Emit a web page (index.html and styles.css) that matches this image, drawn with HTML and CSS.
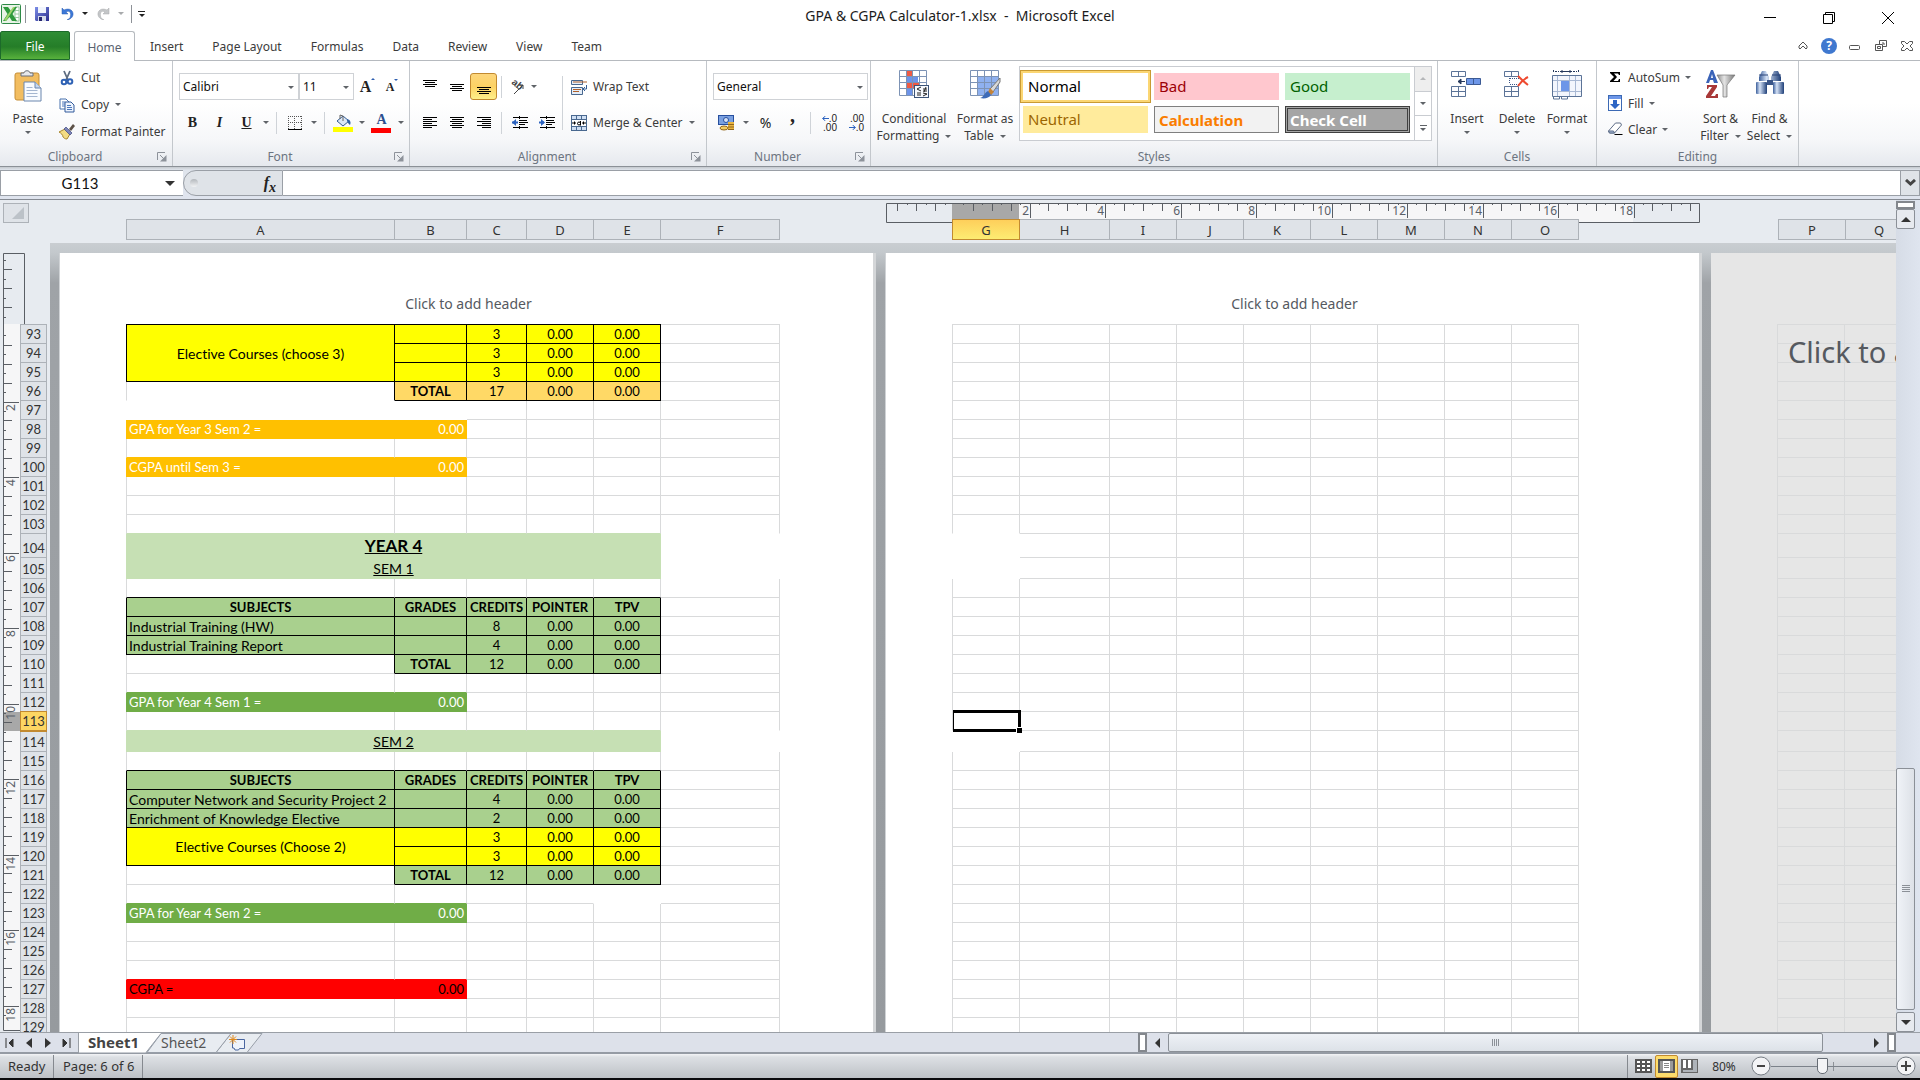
FILE: index.html
```html
<!DOCTYPE html>
<html lang="en">
<head>
<meta charset="utf-8">
<title>GPA &amp; CGPA Calculator-1.xlsx - Microsoft Excel</title>
<link rel="stylesheet" href="styles.css">
</head>
<body>
<svg class="sprite" aria-hidden="true">
  <defs>
    <linearGradient id="g-cyl" x1="0" y1="0" x2="1" y2="0"><stop offset="0" stop-color="#3c5f9b"/><stop offset=".35" stop-color="#d5e2f6"/><stop offset="1" stop-color="#1f3f78"/></linearGradient>
    <linearGradient id="g-metal" x1="0" y1="0" x2="1" y2="0"><stop offset="0" stop-color="#8b8b8b"/><stop offset=".4" stop-color="#e4e4e4"/><stop offset="1" stop-color="#777"/></linearGradient>
    <linearGradient id="g-save" x1="0" y1="0" x2="1" y2="1"><stop offset="0" stop-color="#7d8fe8"/><stop offset="1" stop-color="#2a2c8c"/></linearGradient>
  </defs>
  <symbol id="excel" viewBox="0 0 20 20"><rect x=".5" y=".5" width="19" height="19" rx="1" fill="#e9f3e7" stroke="#2e8a47"/><path d="M14 3h4v14h-4z" fill="#fff" stroke="#9ccaa3"/><path d="M14 6.500h4M14 10h4M14 13.500h4" stroke="#9ccaa3"/><path d="M2 3h5l3 4 3-4h3l-4.500 7L16 17h-5l-2.500-4L5 17H2l4.500-7z" fill="#2f9a3d"/><path d="M3 16l9-13h2L5 17z" fill="#9fd46e"/></symbol>
  <symbol id="save" viewBox="0 0 14 14"><path d="M0 0h14v14H1l-1-1z" fill="url(#g-save)"/><path d="M3 0h8v6H3z" fill="#f1f5fd"/><path d="M3 9h8v5H3z" fill="#d5dbea"/><path d="M4 10h3v4H4z" fill="#25266e"/></symbol>
  <symbol id="undo" viewBox="0 0 13 13"><path d="M1 1v6h6L5 5c3-2 6 0 4 6l-3 2c6-1 8-7 4-10-2-1.500-5-1-7 0z" fill="#3c78d8" stroke="#2a5db0" stroke-width=".5"/></symbol>
  <symbol id="redo" viewBox="0 0 13 13"><path d="M12 1v6H6l2-2C5 3 2 5 4 11l3 2C1 12-1 6 3 3c2-1.500 5-1 7 0z" fill="#c4c6c8" stroke="#a9abad" stroke-width=".5"/></symbol>
  <symbol id="paste" viewBox="0 0 28 32"><rect x="1" y="3" width="24" height="27" rx="2" fill="#f2bd60" stroke="#c58e36"/><path d="M7 6V3h3c0-3 6-3 6 0h3v3z" fill="#e6e8ec" stroke="#6a6f78"/><path d="M10 12h11l6 6v13H10z" fill="#f8fbff" stroke="#6b86ad"/><path d="M21 12v6h6" fill="#c7d8ef" stroke="#6b86ad"/><path d="M12.500 17.500h6M12.500 20.500h11M12.500 23.500h11M12.500 26.500h11" stroke="#a4b6d0"/></symbol>
  <symbol id="cut" viewBox="0 0 16 16"><path d="M5 1l4 9M11 1L7 10" stroke="#5d6c80" stroke-width="1.800"/><circle cx="5" cy="12" r="2.300" fill="none" stroke="#2f62b5" stroke-width="2"/><circle cx="11" cy="11.500" r="2.300" fill="none" stroke="#2f62b5" stroke-width="2"/></symbol>
  <symbol id="copy" viewBox="0 0 16 16"><path d="M1 2h6l3 3v7H1z" fill="#fff" stroke="#4770ad"/><path d="M6 5h6l3 3v7H6z" fill="#eef4fd" stroke="#335b9b"/><path d="M3 5h3M3 7h3M3 9h3M8 8.500h4M8 10.500h5M8 12.500h5" stroke="#4b77bb"/></symbol>
  <symbol id="painter" viewBox="0 0 16 16"><path d="M0 8l6-3 5 5-3 5c-2 0-3-1-4-2 0-2-2-4-4-5z" fill="#f4dc84" stroke="#a8862d"/><path d="M5 5l2-2 6 6-2 2z" fill="#7f86b8" stroke="#3e4780" stroke-width=".7"/><path d="M10 5l4-5 2 2-4 5z" fill="#5c5147"/></symbol>
  <symbol id="launch" viewBox="0 0 10 10"><path d="M.5 8V.5H8" fill="none" stroke="#8d929a"/><path d="M9.500 3v6.500H3z" fill="#8d929a"/><path d="M3 3l4 4" stroke="#8d929a"/></symbol>
  <symbol id="border" viewBox="0 0 14 14"><path d="M0 .5h14M0 6.500h14M.5 0v13M6.500 0v13M13.500 0v13" stroke="#555" stroke-dasharray="1 1" fill="none"/><path d="M0 13.500h14" stroke="#000"/></symbol>
  <symbol id="fill" viewBox="0 0 20 18"><path d="M4 7l6-5 6 5-6 5z" fill="#dbe7f7" stroke="#355d92"/><path d="M7 5V1l3 1v5" fill="none" stroke="#666"/><path d="M14 5c4 1 4 4 3 6-2-1-2-3-3-4z" fill="#2f62a8"/><path d="M0 13h20v5H0z" fill="#ff0"/></symbol>
  <symbol id="lines-top" viewBox="0 0 14 14"><path d="M0 .5h14M2 2.500h10M0 4.500h14M2 6.500h10" stroke="#000"/></symbol>
  <symbol id="lines-mid" viewBox="0 0 14 14"><path d="M0 4.500h14M2 6.500h10M0 8.500h14M2 10.500h10" stroke="#000"/></symbol>
  <symbol id="lines-bot" viewBox="0 0 14 14"><path d="M0 7.500h14M2 9.500h10M0 11.500h14M2 13.500h10" stroke="#000"/></symbol>
  <symbol id="al-left" viewBox="0 0 14 12"><path d="M0 .5h14M0 2.500h9M0 4.500h14M0 6.500h9M0 8.500h14M0 10.500h9" stroke="#000"/></symbol>
  <symbol id="al-center" viewBox="0 0 14 12"><path d="M0 .5h14M2 2.500h10M0 4.500h14M2 6.500h10M0 8.500h14M2 10.500h10" stroke="#000"/></symbol>
  <symbol id="al-right" viewBox="0 0 14 12"><path d="M0 .5h14M5 2.500h9M0 4.500h14M5 6.500h9M0 8.500h14M5 10.500h9" stroke="#000"/></symbol>
  <symbol id="outdent" viewBox="0 0 16 14"><path d="M0 6.500h6" stroke="#2d63bf" stroke-width="2"/><path d="M0 6.500L4 3v7z" fill="#2d63bf"/><path d="M1 1.500h15M8 4.500h7M8 6.500h8M8 8.500h5M1 11.500h15" stroke="#000"/><path d="M7.500 0v14" stroke="#000" stroke-dasharray="1 1"/></symbol>
  <symbol id="indent" viewBox="0 0 16 14"><path d="M0 6.500h5" stroke="#2d63bf" stroke-width="2"/><path d="M6 6.500L2 3v7z" fill="#2d63bf"/><path d="M1 1.500h15M8 4.500h7M8 6.500h8M8 8.500h5M1 11.500h15" stroke="#000"/><path d="M7.500 0v14" stroke="#000" stroke-dasharray="1 1"/></symbol>
  <symbol id="wrap" viewBox="0 0 16 16"><path d="M.5 1.500h11v4H.5zM.5 8.500h11v7H.5z" fill="#e4edf8" stroke="#49688f"/><path d="M2 3h14" stroke="#b0602a"/><path d="M2 10.500h8M2 12.500h6" stroke="#b0602a"/><path d="M15.500 6v4h-3M14 8l-2 2 2 2" stroke="#355d92" fill="none"/></symbol>
  <symbol id="merge" viewBox="0 0 16 16"><rect x=".5" y=".5" width="15" height="15" fill="#cfdff3" stroke="#49688f"/><path d="M1 4.500h14M1 11.500h14M5.500 1v3M10.500 1v3M5.500 12v3M10.500 12v3" stroke="#49688f"/><path d="M1 5h14v6H1z" fill="#fff"/><path d="M1 8h3M12 8h3" stroke="#000"/><path d="M3 6l2 2-2 2zM13 6l-2 2 2 2z"/><circle cx="8" cy="8.500" r="1.500" fill="none" stroke="#000"/><path d="M9.500 6v4.500" stroke="#000"/></symbol>
  <symbol id="money" viewBox="0 0 17 16"><rect x=".5" y=".5" width="15" height="9" fill="#7aa0e0" stroke="#274f9e"/><circle cx="8" cy="5" r="2.500" fill="#d7e3f7" stroke="#274f9e"/><path d="M10 7h6v8h-6z" fill="#e8b440"/><path d="M10 9.500h6M10 12h6M10 14.500h6" stroke="#94661a"/><ellipse cx="6" cy="13" rx="4" ry="2" fill="#f4cd62" stroke="#94661a"/></symbol>
  <symbol id="cond" viewBox="0 0 31 29"><path d="M.5 .5h27v25H.5z" fill="#fff"/><path d="M7 0h7v6H7zM7 13h13v6H7z" fill="#ee5a44"/><path d="M7 6h12v7H7zM7 19h6v6H7z" fill="#6c93ea"/><path d="M.5 .5h27v25H.5zM0 6.500h28M0 12.500h28M0 18.500h28M7.500 0v25M13.500 0v25M20.500 0v25" fill="none" stroke="#7d93b5"/><rect x="15.500" y="15.500" width="14" height="12" fill="#f6f9fe" stroke="#3c5478"/><path d="M22 17l-4 2 4 2M18 23h4M18 25h4M24 19h4M24 21h4M27 17l-2 5M24 23l4 1-4 2" stroke="#222" fill="none"/></symbol>
  <symbol id="fmt-table" viewBox="0 0 31 29"><path d="M.5 .5h28v25H.5z" fill="#fff"/><path d="M7 7h21v18H7z" fill="#8fb1f0"/><path d="M.5 .5h28v25H.5zM0 6.500h28M0 12.500h28M0 18.500h28M7.500 0v25M14.500 0v25M21.500 0v25" fill="none" stroke="#7d93b5"/><path d="M30 8L20 19l3 3 7-10z" fill="#d8d8d8" stroke="#777"/><path d="M20 18l4 4-3 3-3-3z" fill="#c48338"/><path d="M18 21l3 4c-2 3-6 4-11 3 4-1 4-5 8-7z" fill="#3e6bb8"/></symbol>
  <symbol id="ins" viewBox="0 0 32 28"><path d="M.5 1.500h14v5H.5zM7.500 2v4M.5 16.500h14v10H.5zM.5 21.500h14M7.500 17v9" fill="#fdfdff" stroke="#5b7397"/><path d="M15.500 8.500h14v6h-14zM22.500 9v5" fill="#6d96e8" stroke="#3c5a94"/><path d="M7 11.500h7M10 9l-3 2.500 3 2.500z" stroke="#26395c" fill="#26395c"/></symbol>
  <symbol id="del" viewBox="0 0 26 28"><path d="M.5 1.500h14v5H.5zM7.500 2v4M.5 16.500h14v10H.5zM.5 21.500h14M7.500 17v9" fill="#fdfdff" stroke="#5b7397"/><path d="M6 8.500h9M6 14.500h9M5.500 8v6" stroke="#3a5688" stroke-dasharray="1 1"/><path d="M14 6c3 3 6 6 10 9M24 7c-4 2-7 5-10 9" stroke="#ee4a30" stroke-width="2" fill="none"/></symbol>
  <symbol id="fmt" viewBox="0 0 30 30"><path d="M1.500 0v3M26.500 0v3M3 1.500h4M21 1.500h4" stroke="#26395c" stroke-dasharray="2 1"/><path d="M8 1.500h12M10 0v3M18 0v3" stroke="#26395c"/><path d="M.5 5.500h29v21H.5z" fill="#f3f6fd" stroke="#5b7397"/><path d="M1 10.500h28M1 21.500h28M5.500 6v20M17.500 6v20M23.500 6v20" stroke="#a9b9d4"/><path d="M9 11h8v10H9z" fill="#6d96e8"/><path d="M1.500 27v2h6v-2M9.500 27v2h6v-2" stroke="#5b7397" fill="#fff"/></symbol>
  <symbol id="sigma" viewBox="0 0 12 12"><path d="M1 1h10v3h-1L9 2.500H5L8 6l-3.500 4H9l1-2h1v3H1v-1l4-4-4-4z"/></symbol>
  <symbol id="filldown" viewBox="0 0 14 16"><rect x=".5" y=".5" width="13" height="15" fill="#fff" stroke="#3c69b4"/><path d="M1 1h12v3H1z" fill="#6d96e8"/><path d="M5 5h4v4h3l-5 5-5-5h3z" fill="#2f66c4"/></symbol>
  <symbol id="eraser" viewBox="0 0 15 14"><path d="M1 9l7-8h5l1 2-7 8H2z" fill="#fff" stroke="#5d6c86"/><path d="M1 9h5l1 2H2z" fill="#a8bde0" stroke="#5d6c86"/><path d="M7 12.500h8" stroke="#000"/></symbol>
  <symbol id="funnel" viewBox="0 0 30 30"><path d="M11 5h18l-8 10v12h-4V15z" fill="url(#g-metal)" stroke="#777" stroke-width=".7"/><path d="M0 13L5 0h2l5 13H8l-1-3H4l-1 3zM5 8h2L6 4z" fill="#3a63b8"/><path d="M1 15h10v2L5 26h4l1-2h2v4H0v-2l6-9H3l-1 2H1z" fill="#a83838"/></symbol>
  <symbol id="binoc" viewBox="0 0 28 25"><path d="M6 1h4l3 6v4H3V7zM18 1h4l3 6v4H15V7z" fill="url(#g-cyl)"/><path d="M3 5h9M16 5h9" stroke="#2a4578"/><path d="M11 10h6v5h-6z" fill="#3a5588"/><rect x="0" y="12" width="11" height="12" rx="1" fill="url(#g-cyl)"/><rect x="17" y="12" width="11" height="12" rx="1" fill="url(#g-cyl)"/></symbol>
  <symbol id="newsheet" viewBox="0 0 18 16"><path d="M4.500 4.500h12v9h-5l-1 1.500H7l-1-2H4.500z" fill="#eef3fb" stroke="#4a66a0"/><path d="M5 0v9M1 4.500h8M2 1.500l6 6M8 1.500l-6 6" stroke="#e08a1e"/></symbol>
  <symbol id="arrow-l" viewBox="0 0 7 5"><path d="M1 2.500h6M3.500 0L.5 2.500l3 2.500" fill="none" stroke="#2d63bf"/></symbol>
  <symbol id="arrow-r" viewBox="0 0 7 5"><path d="M0 2.500h6M3.500 0l3 2.500-3 2.500" fill="none" stroke="#2d63bf"/></symbol>
</svg>

<header class="titlebar">
  <div class="quick">
    <svg class="i20"><use href="#excel"/></svg>
    <i class="bar"></i>
    <button class="qbtn" aria-label="Save"><svg class="i14"><use href="#save"/></svg></button>
    <button class="qbtn dd dark" aria-label="Undo"><svg class="i13"><use href="#undo"/></svg></button>
    <button class="qbtn dd pale" aria-label="Redo"><svg class="i13"><use href="#redo"/></svg></button>
    <i class="bar"></i>
    <button class="qbtn more dark" aria-label="Customize toolbar"></button>
  </div>
  <h1 class="title">GPA &amp; CGPA Calculator-1.xlsx&nbsp; -&nbsp; Microsoft Excel</h1>
  <div class="winctl">
    <button aria-label="Minimize"><svg width="12" height="12"><path d="M0 5.500h12" stroke="#000"/></svg></button>
    <button aria-label="Restore"><svg width="12" height="12"><path d="M.5 2.500h9v9h-9zM2.500 2V.5h9v9H10" fill="none" stroke="#000"/></svg></button>
    <button aria-label="Close"><svg width="12" height="12"><path d="M0 0l12 12M12 0L0 12" stroke="#000"/></svg></button>
  </div>
</header>

<nav class="tabs">
  <button class="tab file">File</button>
  <button class="tab active">Home</button>
  <button class="tab">Insert</button>
  <button class="tab">Page Layout</button>
  <button class="tab">Formulas</button>
  <button class="tab">Data</button>
  <button class="tab">Review</button>
  <button class="tab">View</button>
  <button class="tab">Team</button>
  <div class="docctl">
    <button aria-label="Collapse ribbon"><svg width="10" height="9"><path d="M1 5l4-4 4 4v2l-1 1-3-3-3 3-1-1z" fill="#fff" stroke="#555"/></svg></button>
    <button class="help" aria-label="Help">?</button>
    <button aria-label="Minimize workbook"><svg width="12" height="8"><rect x=".5" y="3.500" width="10" height="4" rx="1" fill="#fff" stroke="#555"/></svg></button>
    <button aria-label="Restore workbook"><svg width="12" height="12"><path d="M4.500 4V.5h7v6H8M.5 4.500h7v6h-7zM2.500 6.500h3v2h-3zM7 3h2v2" fill="none" stroke="#555"/></svg></button>
    <button aria-label="Close workbook"><svg width="12" height="10"><path d="M.5.5h3L6 3 8.500.5h3v2L9 5l2.500 2.500v2h-3L6 7 3.500 9.500h-3v-2L3 5 .5 2.500z" fill="#fff" stroke="#555"/></svg></button>
  </div>
</nav>

<section class="ribbon">
  <div class="group clipboard">
    <div class="gbody">
      <button class="big paste"><svg width="28" height="32"><use href="#paste"/></svg><span>Paste</span><i class="arrow"></i></button>
      <div class="stack">
        <button class="small"><svg class="i16"><use href="#cut"/></svg>Cut</button>
        <button class="small"><svg class="i16"><use href="#copy"/></svg>Copy<i class="arrow"></i></button>
        <button class="small"><svg class="i16"><use href="#painter"/></svg>Format Painter</button>
      </div>
    </div>
    <div class="glabel">Clipboard<svg class="launch"><use href="#launch"/></svg></div>
  </div>
  <div class="group font">
    <div class="gbody rows">
      <div class="row">
        <span class="combo name"><select aria-label="Font"><option>Calibri</option></select></span>
        <span class="combo size"><select aria-label="Font size"><option>11</option></select></span>
        <button class="tool glyph grow" aria-label="Grow font">A</button>
        <button class="tool narrow glyph shrink" aria-label="Shrink font">A</button>
      </div>
      <div class="row">
        <button class="tool glyph">B</button><button class="tool glyph italic">I</button><button class="tool glyph under">U</button><i class="arrow cell"></i>
        <i class="vsep"></i>
        <button class="tool" aria-label="Borders"><svg class="i14"><use href="#border"/></svg></button><i class="arrow cell"></i>
        <i class="vsep"></i>
        <button class="tool" aria-label="Fill color"><svg width="20" height="18"><use href="#fill"/></svg></button><i class="arrow cell"></i>
        <button class="tool glyph fontcolor" aria-label="Font color">A</button><i class="arrow cell"></i>
      </div>
    </div>
    <div class="glabel">Font<svg class="launch"><use href="#launch"/></svg></div>
  </div>
  <div class="group align">
    <div class="gbody">
      <div class="rows">
        <div class="row">
          <button class="tool" aria-label="Top align"><svg class="i14"><use href="#lines-top"/></svg></button>
          <button class="tool" aria-label="Middle align"><svg class="i14"><use href="#lines-mid"/></svg></button>
          <button class="tool on" aria-label="Bottom align"><svg class="i14"><use href="#lines-bot"/></svg></button>
          <i class="vsep"></i>
          <button class="tool narrow" aria-label="Orientation"><svg class="orient" width="16" height="16"><text x="1" y="9" class="ab" transform="rotate(40 8 8)">ab</text><path d="M5 15L14 6M10 6h4v4" fill="none" stroke="#444"/></svg></button><i class="arrow cell"></i>
        </div>
        <div class="row">
          <button class="tool" aria-label="Align left"><svg width="14" height="12"><use href="#al-left"/></svg></button>
          <button class="tool" aria-label="Center"><svg width="14" height="12"><use href="#al-center"/></svg></button>
          <button class="tool" aria-label="Align right"><svg width="14" height="12"><use href="#al-right"/></svg></button>
          <i class="vsep"></i>
          <button class="tool" aria-label="Decrease indent"><svg width="16" height="14"><use href="#outdent"/></svg></button>
          <button class="tool" aria-label="Increase indent"><svg width="16" height="14"><use href="#indent"/></svg></button>
        </div>
      </div>
      <div class="rows wrapcol">
        <button class="small row"><svg class="i16"><use href="#wrap"/></svg>Wrap Text</button>
        <button class="small row"><svg class="i16"><use href="#merge"/></svg>Merge &amp; Center<i class="arrow"></i></button>
      </div>
    </div>
    <div class="glabel">Alignment<svg class="launch"><use href="#launch"/></svg></div>
  </div>
  <div class="group number">
    <div class="gbody rows">
      <div class="row"><span class="combo format"><select aria-label="Number format"><option>General</option></select></span></div>
      <div class="row">
        <button class="tool" aria-label="Accounting format"><svg width="17" height="16"><use href="#money"/></svg></button><i class="arrow cell"></i>
        <button class="tool pct">%</button><button class="tool glyph comma">,</button>
        <i class="vsep"></i>
        <button class="tool dec" aria-label="Increase decimal"><span><svg width="7" height="5"><use href="#arrow-l"/></svg>.0</span><span>.00</span></button>
        <button class="tool dec" aria-label="Decrease decimal"><span>.00</span><span><svg width="7" height="5"><use href="#arrow-r"/></svg>.0</span></button>
      </div>
    </div>
    <div class="glabel">Number<svg class="launch"><use href="#launch"/></svg></div>
  </div>
  <div class="group styles">
    <div class="gbody">
      <button class="big cond"><svg width="31" height="29"><use href="#cond"/></svg><span>Conditional<br>Formatting<i class="arrow"></i></span></button>
      <button class="big ftab"><svg width="31" height="29"><use href="#fmt-table"/></svg><span>Format as<br>Table<i class="arrow"></i></span></button>
      <div class="gallery">
        <div class="swatches">
          <button class="sw normal">Normal</button><button class="sw bad">Bad</button><button class="sw good">Good</button>
          <button class="sw neutral">Neutral</button><button class="sw calc">Calculation</button><button class="sw check">Check Cell</button>
        </div>
        <div class="gscroll">
          <button class="off" aria-label="Previous styles"><i class="arrow up"></i></button>
          <button aria-label="Next styles"><i class="arrow"></i></button>
          <button class="all" aria-label="All styles"><i class="arrow"></i></button>
        </div>
      </div>
    </div>
    <div class="glabel">Styles</div>
  </div>
  <div class="group cells">
    <div class="gbody">
      <button class="big"><svg width="32" height="28"><use href="#ins"/></svg><span>Insert</span><i class="arrow"></i></button>
      <button class="big"><svg width="26" height="28"><use href="#del"/></svg><span>Delete</span><i class="arrow"></i></button>
      <button class="big"><svg width="30" height="30"><use href="#fmt"/></svg><span>Format</span><i class="arrow"></i></button>
    </div>
    <div class="glabel">Cells</div>
  </div>
  <div class="group editing">
    <div class="gbody">
      <div class="stack">
        <button class="small"><svg width="16" height="12"><use href="#sigma"/></svg>AutoSum<i class="arrow"></i></button>
        <button class="small"><svg class="i16"><use href="#filldown"/></svg>Fill<i class="arrow"></i></button>
        <button class="small"><svg width="16" height="14"><use href="#eraser"/></svg>Clear<i class="arrow"></i></button>
      </div>
      <button class="big"><svg width="30" height="30"><use href="#funnel"/></svg><span>Sort &amp;<br>Filter<i class="arrow"></i></span></button>
      <button class="big"><svg width="28" height="25"><use href="#binoc"/></svg><span>Find &amp;<br>Select<i class="arrow"></i></span></button>
    </div>
    <div class="glabel">Editing</div>
  </div>
</section>

<section class="formulabar">
  <div class="namebox"><input aria-label="Name box" value="G113"><i class="arrow dark"></i></div>
  <div class="fx"><i class="dot"></i><button aria-label="Insert function"><em>f</em><sub>x</sub></button></div>
  <input class="formula" aria-label="Formula bar" value="">
  <button class="expand" aria-label="Expand formula bar"><svg width="11" height="8"><path d="M1 1l4.500 4L10 1" fill="none" stroke="#444" stroke-width="3"/></svg></button>
</section>

<main class="workspace">
  <div class="headstrip">
    <button class="corner" aria-label="Select all"><svg width="12" height="12"><path d="M12 0v12H0z" fill="#bcc2c8"/></svg></button>
    <div class="colheads" id="heads-1"></div>
    <div class="rulerbox"><svg id="hruler" width="816" height="20"></svg><div class="colheads" id="heads-2"></div></div>
    <div class="colheads last" id="heads-3"></div>
  </div>
  <div class="canvas">
    <div class="gutter">
      <svg id="vruler" width="25" height="778"></svg>
      <div class="rowheads" id="rowheads"></div>
    </div>
    <div class="pages">
      <section class="page"><p class="pagehead">Click to add header</p><table id="sheet-1" aria-label="Page 1"></table></section>
      <section class="page"><p class="pagehead">Click to add header</p><table id="sheet-2" aria-label="Page 2"></table></section>
      <section class="page blank"><p class="hint">Click to add data</p><table id="sheet-3" aria-label="Page 3"></table></section>
    </div>
  </div>
  <div class="vscroll">
    <i class="split"></i>
    <button aria-label="Scroll up"><i class="arrow up dark"></i></button>
    <div class="track"><div class="thumb"><i class="grip"></i></div></div>
    <button aria-label="Scroll down"><i class="arrow dark"></i></button>
  </div>
</main>

<footer class="sheetbar">
  <div class="nav">
    <button aria-label="First sheet"><svg width="9" height="10"><path d="M1 0v10M8 1v8L4 5z" fill="#333" stroke="#333" stroke-width="1"/></svg></button>
    <button aria-label="Previous sheet"><svg width="6" height="10"><path d="M6 0v10L0 5z" fill="#333"/></svg></button>
    <button aria-label="Next sheet"><svg width="6" height="10"><path d="M0 0v10l6-5z" fill="#333"/></svg></button>
    <button aria-label="Last sheet"><svg width="9" height="10"><path d="M8 0v10M1 1v8l4-4z" fill="#333" stroke="#333" stroke-width="1"/></svg></button>
  </div>
  <div class="sheets">
    <svg class="tabshapes" width="190" height="20"><path d="M137 19.500L152 .5h31L168 19.500z" fill="#e8ecf1" stroke="#979ea8"/><path d="M68 19.500L82 .5h70L137 19.500z" fill="#e8ecf1" stroke="#979ea8"/><path d="M0 0h82L67 19.500H0z" fill="#fff"/><path d="M82 .5L67 19.500" stroke="#979ea8"/></svg>
    <button class="current">Sheet1</button>
    <button>Sheet2</button>
    <button aria-label="New sheet"><svg width="18" height="16"><use href="#newsheet"/></svg></button>
  </div>
  <div class="hscroll">
    <i class="split"></i>
    <button aria-label="Scroll left"><i class="arrow left"></i></button>
    <div class="thumb"><i class="grip"></i></div>
    <div class="track"></div>
    <button aria-label="Scroll right"><i class="arrow right"></i></button>
    <i class="split"></i>
  </div>
</footer>

<footer class="status">
  <span class="cellmode">Ready</span>
  <span class="pageno">Page: 6 of 6</span>
  <span class="space"></span>
  <div class="views">
    <button aria-label="Normal view"><svg width="17" height="14"><path d="M0 0h17v14H0z" fill="#555"/><path d="M2 2h3v2H2zM7 2h3v2H7zM12 2h3v2h-3zM2 6h3v2H2zM7 6h3v2H7zM12 6h3v2h-3zM2 10h3v2H2zM7 10h3v2H7zM12 10h3v2h-3z" fill="#fff"/></svg></button>
    <button class="on" aria-label="Page layout view"><svg width="17" height="14"><path d="M1 1h15v12H1z" fill="#999" stroke="#555" stroke-width="2"/><path d="M5 2h7v10H5z" fill="#fff"/><path d="M6 4.500h5M6 6.500h5M6 8.500h5" stroke="#888"/></svg></button>
    <button aria-label="Page break preview"><svg width="17" height="14"><path d="M0 0h17v14H0z" fill="#666"/><path d="M2 1h3v8H2zM7 1h3v8H7z" fill="#fff"/><path d="M12 1h4v12H2v-2h10z" fill="#aeb3b9"/></svg></button>
  </div>
  <button class="pctlabel">80%</button>
  <div class="zoom">
    <button aria-label="Zoom out"><svg width="20" height="20"><circle cx="10" cy="10" r="9" fill="#f3f4f6" stroke="#777d85"/><path d="M6 10h8" stroke="#444" stroke-width="2"/></svg></button>
    <input type="range" min="0" max="100" value="40" aria-label="Zoom">
    <button aria-label="Zoom in"><svg width="20" height="20"><circle cx="10" cy="10" r="9" fill="#f3f4f6" stroke="#777d85"/><path d="M5 10h10M10 5v10" stroke="#444" stroke-width="2"/></svg></button>
  </div>
</footer>
<script src="script.js"></script>
</body>
</html>
```

FILE: styles.css
```css
* { box-sizing: border-box; }
html, body { height: 100%; margin: 0; }
body {
  display: flex;
  flex-direction: column;
  overflow: hidden;
  background: #fff;
  border-bottom: 2px solid #0b0b0d;
  color: #3b3b3b;
  font: 12px/17px "Noto Sans", "Open Sans", sans-serif;
}
button, input, select {
  margin: 0;
  padding: 0;
  border: 0;
  border-radius: 0;
  background: none;
  color: inherit;
  font: inherit;
}
svg { display: block; flex: none; }
i { font-style: normal; }
.sprite { position: absolute; width: 0; height: 0; }
.i20 { width: 20px; height: 20px; }
.i16 { width: 16px; height: 16px; }
.i14 { width: 14px; height: 14px; }
.i13 { width: 13px; height: 13px; }

.arrow {
  display: inline-block;
  flex: none;
  border: 3px solid transparent;
  border-top-color: #5f6368;
  border-bottom: 0;
  vertical-align: middle;
}
.arrow.up { border: 3px solid transparent; border-top: 0; border-bottom-color: #5f6368; }
.arrow.dark { border-width: 5px; border-bottom-width: 0; border-top-color: #333; }
.arrow.up.dark { border-width: 5px; border-top-width: 0; border-bottom-color: #333; }
.arrow.left { border: 5px solid transparent; border-left: 0; border-right-color: #333; }
.arrow.right { border: 5px solid transparent; border-right: 0; border-left-color: #333; }
.arrow.cell { margin: 0 3px; }

/* title bar */
.titlebar { position: relative; display: flex; flex: none; height: 31px; justify-content: space-between; }
.quick { display: flex; align-items: center; padding: 0 1px; height: 27px; }
.quick .bar { width: 1px; height: 18px; margin: 0 4px; background: #8d9197; }
.qbtn { display: flex; align-items: center; justify-content: center; height: 22px; margin: 0 5px; }
.qbtn.dd { gap: 8px; margin: 0 7px; }
.qbtn.dd + .qbtn.dd { margin: 0 3px 0 2px; }
.qbtn.dd::after, .qbtn.more::after { content: ""; border: 3px solid transparent; border-top-color: #222; border-bottom: 0; }
.qbtn.pale::after { border-top-color: #a8aaac; }
.qbtn.more { flex-direction: column; gap: 2px; margin: 0 2px; }
.qbtn.more::before { content: ""; width: 7px; height: 1px; background: #222; }
.title { position: absolute; inset: 0; margin: 0; text-align: center; color: #1c1c1c; font-size: 14px; font-weight: 400; line-height: 32px; pointer-events: none; }
.winctl { display: flex; padding-right: 3px; }
.winctl button { display: flex; align-items: center; justify-content: center; width: 59px; height: 36px; }

/* ribbon tabs */
.tabs { display: flex; flex: none; height: 30px; border-bottom: 1px solid #b6babf; }
.tab { padding: 1px 14px 0 15px; height: 30px; }
.tab.file { width: 70px; margin-right: 4px; padding: 1px 0 0; height: 29px; border: 1px solid #1c6a2a; border-radius: 2px 2px 0 0; background: linear-gradient(#2f8d35, #257d28 55%, #57b13c); color: #fff; }
.tab.active { width: 61px; padding: 1px 0 0; border: 1px solid #b6babf; border-bottom: 0; border-radius: 3px 3px 0 0; background: #fff; color: #5a6371; }
.docctl { display: flex; align-items: center; margin-left: auto; }
.docctl button { display: flex; align-items: center; justify-content: center; width: 26px; height: 24px; }
.docctl .help { width: 16px; height: 16px; margin: 0 5px; border-radius: 8px; background: #3f78cf; color: #fff; font-weight: 700; font-size: 12px; line-height: 16px; }

/* ribbon */
.ribbon { display: flex; flex: none; height: 106px; background: linear-gradient(#fff 40%, #f6f7f9 75%, #e6e9ee); border-bottom: 1px solid #8b9097; }
.group { display: flex; flex: none; flex-direction: column; border-right: 1px solid #c3c7cc; }
.gbody { display: flex; height: 84px; padding-left: 6px; }
.glabel { position: relative; height: 21px; color: #6c7480; text-align: center; line-height: 23px; }
.launch { position: absolute; right: 5px; top: 7px; width: 10px; height: 10px; }
.clipboard { width: 173px; }
.font { width: 237px; }
.align { width: 297px; }
.number { width: 164px; }
.clipboard .glabel, .font .glabel, .align .glabel, .number .glabel { padding-right: 22px; }
.styles { width: 567px; }
.cells { width: 159px; }
.editing { width: 202px; }
.clipboard .gbody, .cells .gbody { padding-left: 4px; }
.rows { display: flex; flex-direction: column; gap: 9px; padding-top: 12px; }
.row { display: flex; align-items: center; height: 27px; }
.tool { display: flex; flex: none; align-items: center; justify-content: center; width: 27px; height: 27px; }
.tool.narrow { width: 22px; }
.tool.on { border: 1px solid #c28a30; border-radius: 3px; background: linear-gradient(#fdd67c, #fdd264 50%, #fef08a); }
.vsep { width: 1px; height: 22px; margin: 0 4px; background: #cfd3d8; }
.glyph { color: #222; font: 700 14px/18px "Liberation Serif", serif; }
.glyph.italic { font-style: italic; }
.glyph.under { text-decoration: underline; }
.glyph.comma { font-size: 20px; line-height: 12px; align-items: flex-start; }
.glyph.grow { font-size: 16px; }
.glyph.shrink { font-size: 12px; }
.glyph.grow::after { content: ""; align-self: flex-start; margin-top: 5px; border: 2px solid transparent; border-top: 0; border-bottom-color: #2f5fb0; }
.glyph.shrink::after { content: ""; align-self: flex-start; margin-top: 6px; border: 2px solid transparent; border-bottom: 0; border-top-color: #2f5fb0; }
.fontcolor { height: 20px; align-items: flex-start; color: #2c4f8f; line-height: 14px; background: linear-gradient(red, red) 3px 15px / 20px 5px no-repeat; }
.orient { overflow: visible; }
.ab { font: 700 10px "Liberation Sans", sans-serif; fill: #444; }
.pct { font-size: 14px; color: #222; }
.dec { flex-direction: column; font: 10px/9px "Liberation Sans", sans-serif; color: #222; align-items: flex-end; padding-right: 5px; }
.dec span { display: flex; align-items: center; }
.combo { position: relative; display: block; height: 27px; border: 1px solid #cfd2d6; background: #fff; color: #111; }
.combo select { width: 100%; height: 25px; padding: 0 0 1px 3px; appearance: none; }
.combo::after { content: ""; position: absolute; right: 4px; top: 12px; border: 3px solid transparent; border-top-color: #5f6368; border-bottom: 0; pointer-events: none; }
.combo.name { width: 120px; }
.combo.size { width: 55px; }
.combo.format { width: 155px; }
.small { display: flex; align-items: center; gap: 6px; white-space: nowrap; }
.stack { display: flex; flex-direction: column; padding-top: 3px; }
.stack .small { height: 27px; }
.clipboard .stack { padding-left: 7px; }
.editing .stack { width: 89px; }
.editing .stack .small { height: 26px; gap: 5px; }
.wrapcol { position: relative; padding-left: 11px; }
.wrapcol::before { content: ""; position: absolute; left: 2px; top: 15px; width: 1px; height: 54px; background: #cfd3d8; }
.big { display: flex; flex-direction: column; align-items: center; width: 50px; height: 83px; padding-top: 9px; white-space: nowrap; }
.big svg { margin-bottom: auto; }
.big span { height: 34px; text-align: center; }
.big span .arrow { margin-left: 6px; }
.big > .arrow { margin: -13px 0 10px; }
.paste { width: 48px; }
.cond { width: 74px; }
.ftab { width: 68px; }
.editing .gbody { padding-left: 10px; }
.editing .big { width: 49px; }

.gallery { display: flex; height: 75px; margin-top: 5px; border: 1px solid #c9ccd1; background: #fff; }
.swatches { display: grid; grid-template-columns: 125px 125px 125px; grid-template-rows: 27px 27px; gap: 6px; padding: 6px 4px 0 3px; }
.sw { padding: 0 5px 1px; text-align: left; font: 15px/20px "Noto Sans", sans-serif; }
.normal { color: #000; background: #fff; outline: 1px solid #c99a33; box-shadow: 0 0 0 2px #fbd673; outline-offset: 2px; }
.bad { background: #ffc7ce; color: #9c0006; }
.good { background: #c6efce; color: #006100; }
.neutral { background: #ffeb9c; color: #9c6500; }
.calc { background: #f2f2f2; color: #fa7d00; font-weight: 700; border: 1px solid #7f7f7f; padding: 0 4px; }
.check { background: #a5a5a5; color: #fff; font-weight: 700; border: 3px double #3f3f3f; padding: 0 2px; }
.gscroll { display: flex; flex-direction: column; width: 17px; border-left: 1px solid #c9ccd1; }
.gscroll button { flex: 1; display: flex; align-items: center; justify-content: center; border-bottom: 1px solid #c9ccd1; }
.gscroll button:last-child { border: 0; }
.gscroll .off { background: #eee; }
.gscroll .off .arrow { opacity: 0.4; }
.gscroll .all { flex-direction: column; gap: 2px; }
.gscroll .all::before { content: ""; width: 7px; height: 1px; background: #5f6368; }

/* formula bar */
.formulabar { display: flex; flex: none; height: 33px; padding: 3px 0 4px; background: linear-gradient(#c5c9ce, #dfe4ec 3px, #dfe4ee); border-bottom: 1px solid #858a92; }
.namebox, .fx, .formula, .expand { height: 26px; border-top: 1px solid #9a9fa6; border-bottom: 1px solid #9a9fa6; }
.namebox { display: flex; align-items: center; width: 183px; border-left: 1px solid #9a9fa6; background: #fff; }
.namebox input { width: 158px; text-align: center; color: #111; font: 15px/20px Lato, sans-serif; }
.namebox .arrow { margin-left: 6px; }
.fx { display: flex; align-items: center; justify-content: space-between; width: 100px; padding: 0 6px; border-left: 1px solid #9a9fa6; border-right: 1px solid #9a9fa6; border-radius: 13px 0 0 13px; background: #dfe3e8; }
.fx .dot { width: 8px; height: 8px; border-radius: 4px; background: linear-gradient(#b3b7bc, #f2f3f5); }
.fx button { color: #222; font: italic 700 16px/20px "Liberation Serif", serif; }
.fx sub { font-size: 14px; line-height: 10px; }
.formula { flex: 1; background: #fff; font: 15px/20px Lato, sans-serif; }
.expand { display: flex; align-items: center; justify-content: center; width: 20px; border-left: 1px solid #9a9fa6; border-right: 1px solid #9a9fa6; background: #dfe3e8; }

/* sheet area */
.workspace { display: grid; flex: 1; grid-template: 43px 1fr / 1fr 24px; min-height: 0; background: #e7ebf0; }
.headstrip { display: flex; overflow: hidden; }
.corner { display: flex; align-items: flex-end; justify-content: flex-end; flex: none; width: 26px; height: 20px; margin: 3px 97px 0 3px; padding: 0 4px 3px 0; border: 1px solid #adb2b8; background: #dfe3e8; }
.colheads { display: flex; flex: none; height: 21px; margin-top: 19px; border-left: 1px solid #adb2b8; }
#heads-1 { width: 654px; margin-right: 106px; }
.colheads span { flex: none; border: 1px solid #adb2b8; border-left: 0; background: #dfe3e8; color: #333; text-align: center; font: 13px/20px "Noto Sans", sans-serif; }
.colheads .picked { border-color: #c28a30; box-shadow: -1px 0 #c28a30; background: linear-gradient(#fecf5b, #fdec72); }
.rulerbox { flex: none; width: 816px; padding-top: 3px; }
.rulerbox .colheads { position: relative; width: 627px; margin: -4px 0 0 66px; }
.colheads.last { margin-left: 76px; }
.canvas { grid-column: 1; grid-row: 2; display: flex; overflow: hidden; min-height: 0; }
.gutter { display: flex; flex: none; width: 50px; padding: 10px 0 0 3px; }
.gutter svg { margin-right: -8px; }
.rowheads { width: 27px; flex: none; margin-top: 71px; border: 1px solid #adb2b8; z-index: 1; align-self: flex-start; }
.rowheads span { display: flex; align-items: flex-end; justify-content: center; background: #dfe3e8; border-bottom: 1px solid #adb2b8; color: #333; font: 13px/17px Lato, sans-serif; }
.rowheads .picked { background: #fdd663; outline: 1px solid #c28a30; border-color: #c28a30; }
.pages { display: flex; flex: 1; gap: 9px; min-width: 0; padding: 10px 0 0 9px; background: linear-gradient(#c9cdd1, #c3c8cc 10px, #9fa3a7 40px, #969a9e); overflow: hidden; }
.page { flex: none; width: 817px; padding-left: 66px; background: #fff; border-left: 1px solid #d0d3d6; border-right: 3px solid #d4d6d8; }
.page.blank { position: relative; width: auto; flex: 1; padding-top: 71px; background: #e6e6e6; border: 0; overflow: hidden; }
.pagehead { margin: 0; padding: 40px 62px 0 0; height: 71px; color: #55595f; font-size: 14px; line-height: 22px; text-align: center; }
.hint { position: absolute; left: 77px; top: 81px; margin: 0; color: #55595f; font-size: 29px; line-height: 36px; white-space: nowrap; }

table { table-layout: fixed; border-spacing: 0; border-collapse: separate; font-variant-ligatures: none; }
td { height: 19px; padding: 0 2px; border: 0 solid #d9dadb; border-width: 0 1px 1px 0; color: #000; text-align: center; white-space: nowrap; font-family: Lato, sans-serif; font-size: 13px; line-height: 17px; overflow: hidden; }
td.first { border-left-width: 1px; }
td.top { border-top-width: 1px; }
td.l { text-align: left; }
td.r { text-align: right; }
td.b { font-weight: 700; }
td.name { font-size: 14px; }
td.year { font-size: 17px; line-height: 22px; text-decoration: underline; font-weight: 700; }
td.sem { font-size: 14px; line-height: 19px; text-decoration: underline; }
td.w { color: #fff; }
td.selected { position: relative; overflow: visible; }
td.selected::before { content: ""; position: absolute; inset: -2px -2px -2px 0; border: 3px solid #000; border-left-width: 1px; }
td.selected::after { content: ""; position: absolute; right: -3px; bottom: -3px; width: 5px; height: 5px; background: #000; border: 1px solid #fff; border-width: 1px 0 0 1px; }
.tick { stroke: #5a5e64; fill: none; }
.rnum { font: 12px "Noto Sans", sans-serif; fill: #5a6068; }

/* scroll bars */
.vscroll { grid-column: 2; grid-row: 1 / 3; display: flex; flex-direction: column; padding: 1px 5px 0 0; background: linear-gradient(90deg, #d6dce6, #dfe5ef); }
.vscroll .split { height: 8px; border: 2px solid #83878d; background: #fff; }
.vscroll button { display: flex; align-items: center; justify-content: center; height: 20px; border: 1px solid #8b9097; border-radius: 2px; background: #e7eaef; }
.track { flex: 1; }
.vscroll .track { display: flex; flex-direction: column; justify-content: flex-end; padding-bottom: 2px; }
.thumb { display: flex; align-items: center; justify-content: center; border: 1px solid #8b9097; border-radius: 2px; background: linear-gradient(90deg, #f0f3f8, #dde1e7); }
.vscroll .thumb { height: 31%; }
.grip { width: 8px; height: 7px; background: repeating-linear-gradient(90deg, #8b9097 0 1px, transparent 1px 2px); }
.vscroll .grip { background: repeating-linear-gradient(#8b9097 0 1px, transparent 1px 2px); }

.sheetbar { display: flex; flex: none; height: 22px; border-top: 1px solid #9a9fa6; border-bottom: 2px solid #959ba4; background: #dde1ea; }
.nav { display: flex; align-items: center; width: 79px; border-right: 1px solid #9a9fa6; }
.nav button { display: flex; align-items: center; justify-content: center; width: 19px; height: 18px; }
.sheets { position: relative; display: flex; align-items: center; flex: 1; }
.tabshapes { position: absolute; left: 0; top: 0; }
.sheets button { position: relative; margin-left: 9px; height: 19px; font-size: 14px; line-height: 19px; color: #555; }
.sheets button + button { margin-left: 22px; }
.sheets .current { font-weight: 700; color: #444; font-size: 15px; }
.hscroll { display: flex; width: 40%; max-width: 758px; margin-right: 24px; }
.hscroll .split { width: 9px; border: 2px solid #83878d; background: #fff; }
.hscroll button { display: flex; align-items: center; justify-content: center; width: 21px; }
.hscroll .thumb { flex: 0 1 655px; background: linear-gradient(#eef1f6, #dde2e8); }

/* status bar */
.status { display: flex; align-items: center; flex: none; height: 24px; background: linear-gradient(#f3f4f6, #dde0e4 3px, #bdc1c6); color: #333; font-size: 13px; }
.cellmode, .pageno { height: 23px; line-height: 23px; border-right: 1px solid #85898f; }
.cellmode { width: 54px; padding-left: 8px; }
.pageno { width: 89px; padding-left: 9px; }
.space { flex: 1; }
.views { display: flex; padding-left: 4px; border-left: 1px solid #85898f; }
.views button { display: flex; align-items: center; justify-content: center; width: 23px; height: 23px; }
.views .on { border: 1px solid #c28a30; border-radius: 2px; background: #fddc6c; }
.pctlabel { width: 50px; padding-right: 4px; font-size: 12px; }
.zoom { display: flex; align-items: center; padding-right: 4px; }
.zoom input { width: 125px; height: 20px; appearance: none; background: linear-gradient(#7c828a, #7c828a) 0 10px / 100% 1px no-repeat, linear-gradient(#8d9197, #8d9197) 62px 6px / 1px 9px no-repeat; }
.zoom input::-webkit-slider-thumb { appearance: none; width: 11px; height: 16px; border: 1px solid #666c74; border-radius: 1px 1px 5px 5px; background: #f3f4f6; }
```

FILE: script.js
```js
const GRID = '#d9dadb';
const COLORS = { yellow: '#ffff00', sand: '#ffd966', gold: '#ffc000', mint: '#c6e0b4', sage: '#a9d08e', green: '#70ad47', red: '#ff0000', white: '#ffffff' };
const FIRST = 93;
const LAST = 129;
const TALL = { 104: 24, 105: 21, 114: 21 };
const heightOf = (row) => TALL[row] || 19;

const cell = (text, fill, cls = '', box = false, extra = {}) => ({ text, fill, cls, box, ...extra });
const boxRow = (fill, values, cls = []) => values.map((v, i) => cell(v, fill, cls[i] || '', true));
const subject = (name, credits) => boxRow('sage', [name, '', credits, '0.00', '0.00'], ['l name']);
const heading = boxRow('sage', ['SUBJECTS', 'GRADES', 'CREDITS', 'POINTER', 'TPV'], ['b', 'b', 'b', 'b', 'b']);
const total = (fill, credits) => [null, ...boxRow(fill, ['TOTAL', credits, '0.00', '0.00'], ['b'])];
const elective = (label, span) => [cell(label, 'yellow', 'name', true, { span }), ...boxRow('yellow', ['', '3', '0.00', '0.00'])];
const electiveNext = () => [{ skip: true, box: true, fill: 'yellow' }, ...boxRow('yellow', ['', '3', '0.00', '0.00'])];
const result = (label, fill, cls = ' w') => [cell(label, fill, 'l' + cls), cell('0.00', fill, 'r' + cls)];
const banner = (label, cls) => [
  cell(label, 'mint', cls, false, { cols: 5 }),
  ...Array.from({ length: 4 }, () => ({ skip: true, fill: 'mint' })),
  cell('', 'white'),
];

const pageOne = {
  93: elective('Elective Courses (choose 3)', 3),
  94: electiveNext(),
  95: electiveNext(),
  96: total('sand', '17'),
  97: [cell('', 'white'), cell('', 'white')],
  98: result('GPA for Year 3 Sem 2 =', 'gold'),
  100: result('CGPA until Sem 3 =', 'gold'),
  104: banner('YEAR 4', 'year'),
  105: banner('SEM 1', 'sem'),
  107: heading,
  108: subject('Industrial Training (HW)', '8'),
  109: subject('Industrial Training Report', '4'),
  110: total('sage', '12'),
  112: result('GPA for Year 4 Sem 1 =', 'green'),
  114: banner('SEM 2', 'sem'),
  116: heading,
  117: subject('Computer Network and Security Project 2', '4'),
  118: subject('Enrichment of Knowledge Elective', '2'),
  119: elective('Elective Courses (Choose 2)', 2),
  120: electiveNext(),
  121: total('sage', '12'),
  122: [null, null, null, null, cell('', 'white')],
  123: result('GPA for Year 4 Sem 2 =', 'green'),
  127: result('CGPA =', 'red', ''),
};
const pageTwo = {
  104: [cell('', 'white')],
  105: [cell('', 'white')],
  113: [cell('', null, 'selected')],
  114: [cell('', 'white')],
};

function edge(a, b) {
  if ((a && a.box) || (b && b.box)) return '#000';
  const filled = (a && a.fill) || (b && b.fill);
  return filled ? COLORS[filled] : GRID;
}

function buildTable(id, widths, rows) {
  const table = document.getElementById(id);
  const at = (r, c) => (rows[r] && rows[r][c]) || null;
  table.style.width = widths.reduce((a, b) => a + b, 0) + 'px';
  const group = document.createElement('colgroup');
  widths.forEach((w) => {
    const col = document.createElement('col');
    col.style.width = w + 'px';
    group.append(col);
  });
  table.append(group);
  for (let r = FIRST; r <= LAST; r++) {
    const tr = table.insertRow();
    for (let c = 0; c < widths.length; c++) {
      const d = at(r, c);
      if (d && d.skip) continue;
      const td = tr.insertCell();
      const span = (d && d.span) || 1;
      const cols = (d && d.cols) || 1;
      td.rowSpan = span;
      td.colSpan = cols;
      if (d) {
        td.textContent = d.text;
        td.className = d.cls;
        if (d.fill) td.style.backgroundColor = COLORS[d.fill];
      }
      if (span === 1) td.style.height = heightOf(r) + (r === FIRST ? 1 : 0) + 'px';
      td.style.borderRightColor = edge(d, at(r, c + cols));
      td.style.borderBottomColor = edge(d, at(r + span, c));
      if (c === 0) {
        td.classList.add('first');
        td.style.borderLeftColor = edge(d, null);
      }
      if (r === FIRST) {
        td.classList.add('top');
        td.style.borderTopColor = edge(d, null);
      }
    }
  }
}

function buildHeads(id, names, widths) {
  const box = document.getElementById(id);
  names.forEach((name, i) => {
    const span = document.createElement('span');
    span.textContent = name;
    span.style.width = widths[i] + 'px';
    if (name === 'G') span.className = 'picked';
    box.append(span);
  });
}

const one = [268, 72, 60, 67, 67, 119];
const two = [67, 90, 67, 67, 67, 67, 67, 67, 67];
const three = [67, 67];
const withEdge = (w) => [w[0] + 1, ...w.slice(1)];
buildHeads('heads-1', [...'ABCDEF'], one);
buildHeads('heads-2', [...'GHIJKLMNO'], two);
buildHeads('heads-3', [...'PQ'], three);
buildTable('sheet-1', withEdge(one), pageOne);
buildTable('sheet-2', withEdge(two), pageTwo);
buildTable('sheet-3', withEdge(three), {});

const rowheads = document.getElementById('rowheads');
for (let r = FIRST; r <= LAST; r++) {
  const span = document.createElement('span');
  span.textContent = r;
  span.style.height = heightOf(r) + 'px';
  if (r === 113) span.className = 'picked';
  rowheads.append(span);
}

const CM = 37.75;
function ticks(origin, from, to, draw) {
  for (let q = Math.ceil(((from - origin) / CM) * 4); q <= ((to - origin) / CM) * 4; q++) {
    if (q === 0) continue;
    draw(Math.round(origin + (q * CM) / 4), q);
  }
}

let h = '<rect x="133" y="0" width="614" height="20" fill="#f6f6f7"/><rect x="66" y="0" width="67" height="20" fill="#a8a8a8"/><path class="tick" d="M.5 19.500V.5h813v19z"/>';
ticks(68, 4, 810, (x, q) => {
  const major = q > 0 && q % 8 === 0;
  const len = major ? 15 : q % 2 === 0 ? 8 : 2;
  h += `<path class="tick" d="M${x}.5 0v${len}"/>`;
  if (major) h += `<text class="rnum" x="${x - 1}" y="12" text-anchor="end">${q / 4}</text>`;
});
document.getElementById('hruler').innerHTML = h;

let v = '<rect x="0" y="71" width="17" height="706" fill="#f6f6f7"/><rect x="0" y="459" width="17" height="19" fill="#a8a8a8"/><path class="tick" d="M21.500 71V.5H.5v777H17"/>';
ticks(73, 4, 770, (y, q) => {
  const major = q > 0 && q % 8 === 0;
  const len = major ? 15 : q % 2 === 0 ? 8 : 2;
  v += `<path class="tick" d="M1 ${y}.5h${len}"/>`;
  if (major) v += `<text class="rnum" transform="translate(12 ${y + 2}) rotate(-90)" text-anchor="end">${q / 4}</text>`;
});
document.getElementById('vruler').innerHTML = v;
```
